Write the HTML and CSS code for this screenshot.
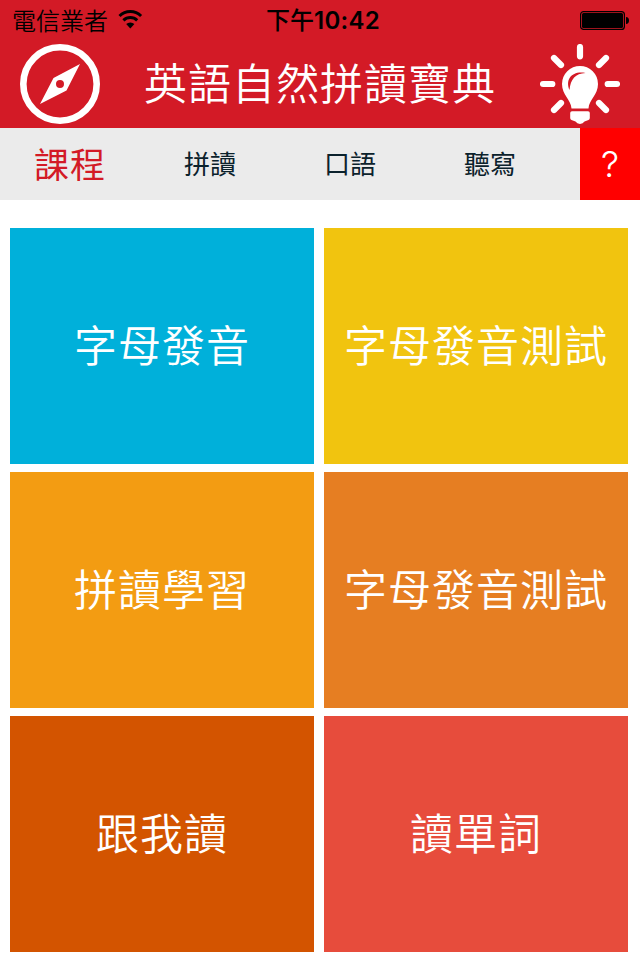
FILE: index.html
```html
<!DOCTYPE html>
<html lang="zh-Hant">
<head>
    <meta charset="utf-8">
    <title>英語自然拼讀寶典</title>
    <link rel="stylesheet" href="styles.css">
</head>
<body>
    <header class="header">
        <div class="status-bar">
            <div class="carrier">
                <span>電信業者</span>
                <svg class="wifi" width="26" height="20" viewBox="0 0 26 20">
                    <path d="M2.500 6a15.500 15.500 0 0 1 21.600 0M6.400 10.300a10 10 0 0 1 13.800 0" fill="none" stroke="#000" stroke-width="3"/>
                    <path d="M9.200 14a6 6 0 0 1 8.200 0L13.300 18.500z"/>
                </svg>
            </div>
            <div class="time">下午<span class="digits">10:42</span></div>
            <svg class="battery" width="50" height="20" viewBox="0 0 50 20">
                <rect x="0.600" y="1.600" width="43.800" height="17.800" rx="3" fill="none" stroke="#000" stroke-width="1.200"/>
                <rect x="2" y="3" width="41" height="15" rx="1.500"/>
                <path d="M46 7c2 0 3 1.500 3 3.500S48 14 46 14z"/>
            </svg>
        </div>
        <div class="title-bar">
            <svg class="icon" width="80" height="80" viewBox="0 0 80 80">
                <circle cx="40" cy="40" r="36.700" fill="none" stroke="#fff" stroke-width="6.600"/>
                <path fill="#fff" fill-rule="evenodd" d="M60 20L46.500 46.500L20 60L33.500 34zM40 36a4 4 0 1 0 0 8a4 4 0 1 0 0-8z"/>
            </svg>
            <h1 class="title">英語自然拼讀寶典</h1>
            <svg class="icon" width="80" height="80" viewBox="0 0 80 80">
                <path d="M40 3v9.300M3 40h9.300M67.700 40h9.300M14 14l7 7M66 14l-7 7M14 66l7-7M66 66l-7-7" fill="none" stroke="#fff" stroke-width="6.200" stroke-linecap="round"/>
                <path fill="#fff" d="M31.500 64.500C31 55.500 22 51 22 40a18 18 0 0 1 36 0C58 51 49 55.500 48.500 64.500z"/>
                <path fill="#fff" d="M32 67.200h16q1.800 0 1.800 1.800v5q0 1.500-1.300 2l-4 1.600Q43 80 40 80t-4.500-2.400L31.500 76q-1.300-.5-1.300-2v-5q0-1.800 1.800-1.800z"/>
                <path class="glare" d="M29.500 46C25 35.500 32 26.500 45.500 29C35.500 29.500 30.500 35 29.500 46z"/>
            </svg>
        </div>
    </header>
    <nav class="tabs">
        <div class="tab active">課程</div>
        <div class="tab">拼讀</div>
        <div class="tab">口語</div>
        <div class="tab">聽寫</div>
        <div class="help">?</div>
    </nav>
    <main class="grid">
        <div class="tile blue">字母發音</div>
        <div class="tile yellow">字母發音測試</div>
        <div class="tile amber">拼讀學習</div>
        <div class="tile orange">字母發音測試</div>
        <div class="tile rust">跟我讀</div>
        <div class="tile red">讀單詞</div>
    </main>
</body>
</html>
```
FILE: styles.css
```css
* {
    box-sizing: border-box;
}
body {
    margin: 0;
    width: 640px;
    height: 960px;
    overflow: hidden;
    background: #fff;
    font-family: "Noto Sans CJK TC", sans-serif;
    font-weight: 350;
}
.header {
    height: 128px;
    background: #d31a26;
}
.status-bar {
    display: grid;
    grid-template-columns: 1fr auto 1fr;
    align-items: center;
    height: 40px;
    padding: 0 10px 0 12px;
    font-size: 24px;
    line-height: 38px;
    color: #000;
}
.carrier {
    display: flex;
    align-items: center;
    gap: 9px;
}
.time {
    padding-left: 4px;
    font-weight: 500;
}
.digits {
    font-family: Inter, sans-serif;
    font-size: 24px;
    font-weight: 600;
    letter-spacing: 0.3px;
}
.battery {
    justify-self: end;
}
.title-bar {
    display: flex;
    align-items: center;
    justify-content: space-between;
    height: 88px;
    padding: 0 20px;
}
.icon {
    display: block;
}
.glare {
    fill: #d31a26;
}
.title {
    margin: 0;
    padding-bottom: 5px;
    font-size: 43px;
    line-height: 79px;
    font-weight: 350;
    letter-spacing: 1px;
    color: #fff;
}
.tabs {
    display: flex;
    height: 72px;
    background: #ebebeb;
}
.tab {
    width: 140px;
    font-size: 26px;
    font-weight: 400;
    line-height: 70px;
    text-align: center;
    color: #0b222c;
}
.tab.active {
    font-size: 35px;
    line-height: 69px;
    letter-spacing: 1px;
    color: #d31a26;
}
.help {
    width: 60px;
    margin-left: auto;
    background: #f00;
    color: #fff;
    font-family: Inter, sans-serif;
    font-size: 36px;
    line-height: 72px;
    text-align: center;
}
.grid {
    display: grid;
    grid-template-columns: 304px 304px;
    grid-auto-rows: 236px;
    gap: 8px 10px;
    padding: 28px 10px 0;
}
.tile {
    font-size: 43px;
    line-height: 231px;
    letter-spacing: 1px;
    text-align: center;
    color: #fff;
}
.blue { background: #00b0da; }
.yellow { background: #f1c40f; }
.amber { background: #f39c12; }
.orange { background: #e67e22; }
.rust { background: #d35400; }
.red { background: #e74c3c; }
```
